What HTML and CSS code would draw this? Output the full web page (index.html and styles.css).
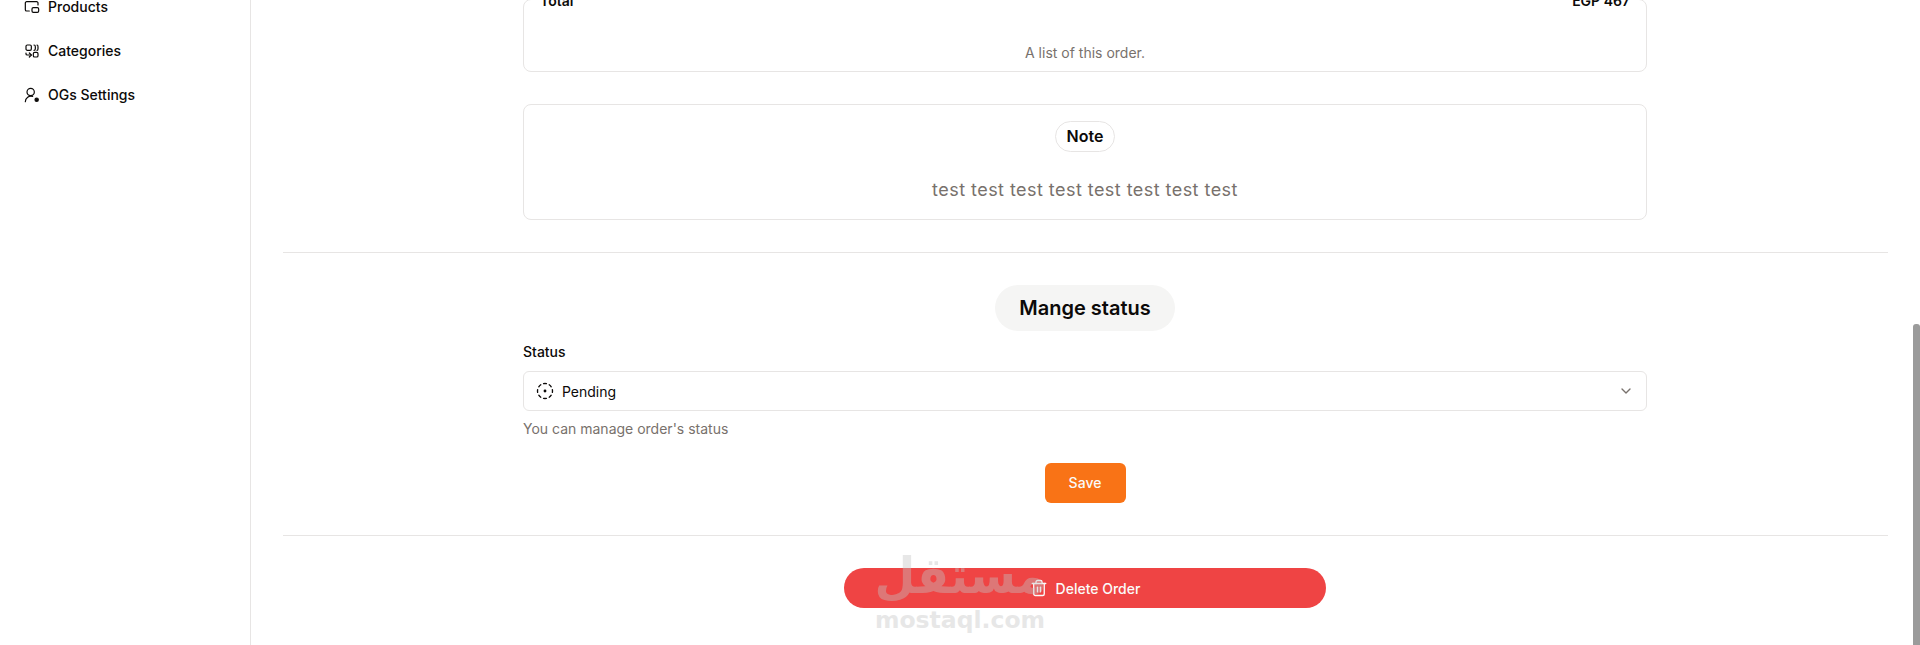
FILE: index.html
```html
<!DOCTYPE html>
<html>

<head>
    <meta charset="utf-8">
    <title>Order</title>
    <link rel="stylesheet" href="styles.css">
</head>

<body>
    <div class="layout">
        <aside class="sidebar">
            <a class="navitem">
                <svg class="icon" viewBox="0 0 24 24"><path d="M21 9V6a2 2 0 0 0-2-2H4a2 2 0 0 0-2 2v10c0 1.1.9 2 2 2h4"/><rect x="12" y="13" width="10" height="7" rx="2"/></svg>
                Products
            </a>
            <a class="navitem">
                <svg class="icon" viewBox="0 0 24 24"><rect x="3" y="3" width="8" height="8" rx="2"/><path d="M15 3c1.500 0 2 1 2 2.500v3c0 1.500-.5 2.500-2 2.500"/><path d="M19.500 3c1.200 0 1.500 1 1.500 2.500v3c0 1.500-.3 2.500-1.500 2.500"/><path d="M3 15v1.500c0 1 1 1.500 2 1.500h6"/><path d="m8 15 3 3-3 3"/><rect x="14" y="14" width="7" height="7" rx="2"/></svg>
                Categories
            </a>
            <a class="navitem">
                <svg class="icon" viewBox="0 0 24 24"><circle cx="10" cy="7.500" r="5.500"/><path d="M2 22a8.500 8.500 0 0 1 11-8"/><circle class="icon-dot" cx="19" cy="19" r="2.500"/></svg>
                OGs Settings
            </a>
        </aside>

        <main class="content">
            <div class="narrow">
                <section class="card order-card">
                    <div class="total-row">
                        <span>Total</span>
                        <span>EGP 467</span>
                    </div>
                    <p class="caption">A list of this order.</p>
                </section>

                <section class="card note-card">
                    <h3 class="note-title">Note</h3>
                    <p class="note-text">test test test test test test test test</p>
                </section>
            </div>

            <hr class="divider">

            <div class="narrow status-box">
                <h2 class="status-title">Mange status</h2>
                <label class="field-label">Status</label>
                <div class="select">
                    <svg class="icon icon-lg" viewBox="0 0 24 24"><path d="M10.100 2.180a9.930 9.930 0 0 1 3.800 0"/><path d="M17.600 3.710a9.950 9.950 0 0 1 2.690 2.700"/><path d="M21.820 10.100a9.930 9.930 0 0 1 0 3.800"/><path d="M20.290 17.600a9.950 9.950 0 0 1-2.700 2.690"/><path d="M13.900 21.820a9.940 9.940 0 0 1-3.800 0"/><path d="M6.400 20.290a9.950 9.950 0 0 1-2.690-2.700"/><path d="M2.180 13.900a9.930 9.930 0 0 1 0-3.800"/><path d="M3.710 6.400a9.950 9.950 0 0 1 2.700-2.690"/><circle cx="12" cy="12" r="1"/></svg>
                    <span class="select-value">Pending</span>
                    <svg class="chevron" viewBox="0 0 24 24"><path d="m6 9 6 6 6-6"/></svg>
                </div>
                <p class="field-help">You can manage order's status</p>
                <button class="btn-save">Save</button>
            </div>

            <hr class="divider">

            <div class="delete-row">
                <button class="btn-delete">
                    <svg class="icon icon-lg" viewBox="0 0 24 24"><path d="M3 6h18"/><path d="M19 6v14c0 1-1 2-2 2H7c-1 0-2-1-2-2V6"/><path d="M8 6V4c0-1 1-2 2-2h4c1 0 2 1 2 2v2"/><path d="M10 11v6"/><path d="M14 11v6"/></svg>
                    Delete Order
                </button>
            </div>
        </main>
    </div>

    <div class="scrollbar"><div class="scrollbar-thumb"></div></div>

    <div class="watermark">
        <span class="watermark-ar" lang="ar" dir="rtl">مستقل</span>
        <span class="watermark-en">mostaql.com</span>
    </div>
</body>

</html>
```

FILE: styles.css
```css
* {
    box-sizing: border-box;
}

html,
body {
    margin: 0;
    height: 645px;
    overflow: hidden;
    background: #fff;
}

body {
    font-family: Inter, "Liberation Sans", sans-serif;
    font-size: 14px;
    color: #0c0a09;
}

.layout {
    display: flex;
    height: 645px;
}

.sidebar {
    width: 251px;
    flex-shrink: 0;
    border-right: 1px solid #e7e5e4;
    padding: 0 16px 0 24px;
    margin-top: -15px;
}

.navitem {
    display: flex;
    align-items: center;
    gap: 8px;
    height: 44px;
    font-weight: 500;
    line-height: 20px;
}

.icon {
    width: 16px;
    height: 16px;
    flex-shrink: 0;
    fill: none;
    stroke: currentColor;
    stroke-width: 1.800;
    stroke-linecap: round;
    stroke-linejoin: round;
}

.icon-lg {
    width: 18px;
    height: 18px;
}

.icon-dot {
    fill: currentColor;
}

.content {
    flex: 1;
    min-width: 0;
    padding: 0 32px;
}

.narrow {
    width: 1124px;
    margin-left: 240px;
}

.card {
    border: 1px solid #e7e5e4;
    border-radius: 8px;
}

.order-card {
    height: 73px;
    margin-top: -1px;
    padding: 0 16px;
}

.total-row {
    display: flex;
    justify-content: space-between;
    font-weight: 600;
    line-height: 20px;
    margin-top: -9px;
}

.caption {
    margin: 32px 0 0;
    text-align: center;
    color: #78716c;
    line-height: 20px;
}

.note-card {
    height: 116px;
    margin-top: 32px;
    padding-top: 16px;
    text-align: center;
}

.note-title {
    display: inline-block;
    margin: 0;
    height: 31px;
    padding: 0 11px;
    border: 1px solid #e7e5e4;
    border-radius: 16px;
    font-size: 16px;
    font-weight: 600;
    line-height: 29px;
}

.note-text {
    margin: 24px 0 0;
    font-size: 18px;
    line-height: 28px;
    letter-spacing: 0.45px;
    color: #78716c;
}

.divider {
    margin: 32px 0;
    border: 0;
    border-top: 1px solid #e7e5e4;
}

.status-box {
    display: flex;
    flex-direction: column;
}

.status-title {
    align-self: center;
    margin: 0;
    height: 46px;
    padding: 0 24px;
    border-radius: 23px;
    background: #f5f5f4;
    font-size: 20px;
    font-weight: 600;
    line-height: 46px;
}

.field-label {
    margin-top: 11px;
    font-weight: 500;
    line-height: 20px;
}

.select {
    display: flex;
    align-items: center;
    height: 40px;
    margin-top: 9px;
    padding: 0 12px;
    border: 1px solid #e7e5e4;
    border-radius: 6px;
    gap: 8px;
}

.select-value {
    flex: 1;
}

.chevron {
    width: 16px;
    height: 16px;
    fill: none;
    stroke: #78716c;
    stroke-width: 2;
    stroke-linecap: round;
    stroke-linejoin: round;
}

.field-help {
    margin: 8px 0 0;
    color: #78716c;
    line-height: 20px;
}

.btn-save {
    align-self: center;
    width: 81px;
    height: 40px;
    margin-top: 24px;
    padding: 0 0 2px;
    border: 0;
    border-radius: 6px;
    background: #f97316;
    color: #fafaf9;
    font: 500 14px Inter, sans-serif;
}

.delete-row {
    display: flex;
    padding-left: 561px;
}

.btn-delete {
    display: flex;
    align-items: center;
    justify-content: center;
    gap: 8px;
    width: 482px;
    height: 40px;
    border: 0;
    border-radius: 20px;
    background: #ef4444;
    color: #fafaf9;
    font: 500 14px Inter, sans-serif;
}

.scrollbar {
    position: absolute;
    top: 0;
    right: 0;
    width: 7px;
    height: 645px;
}

.scrollbar-thumb {
    position: absolute;
    top: 324px;
    right: 0;
    width: 7px;
    height: 321px;
    border-radius: 3px 3px 0 0;
    background: #9b9b9b;
}

.watermark {
    position: absolute;
    left: 875px;
    top: 546px;
    width: 170px;
    display: flex;
    flex-direction: column;
    align-items: center;
    pointer-events: none;
    opacity: 0.4;
    color: #c4c4c4;
    font-family: "DejaVu Sans", sans-serif;
    font-weight: 700;
}

.watermark-ar {
    font-size: 50px;
    line-height: 60px;
    transform: scaleX(0.94);
}

.watermark-en {
    font-size: 23.500px;
    line-height: 28px;
}
```
